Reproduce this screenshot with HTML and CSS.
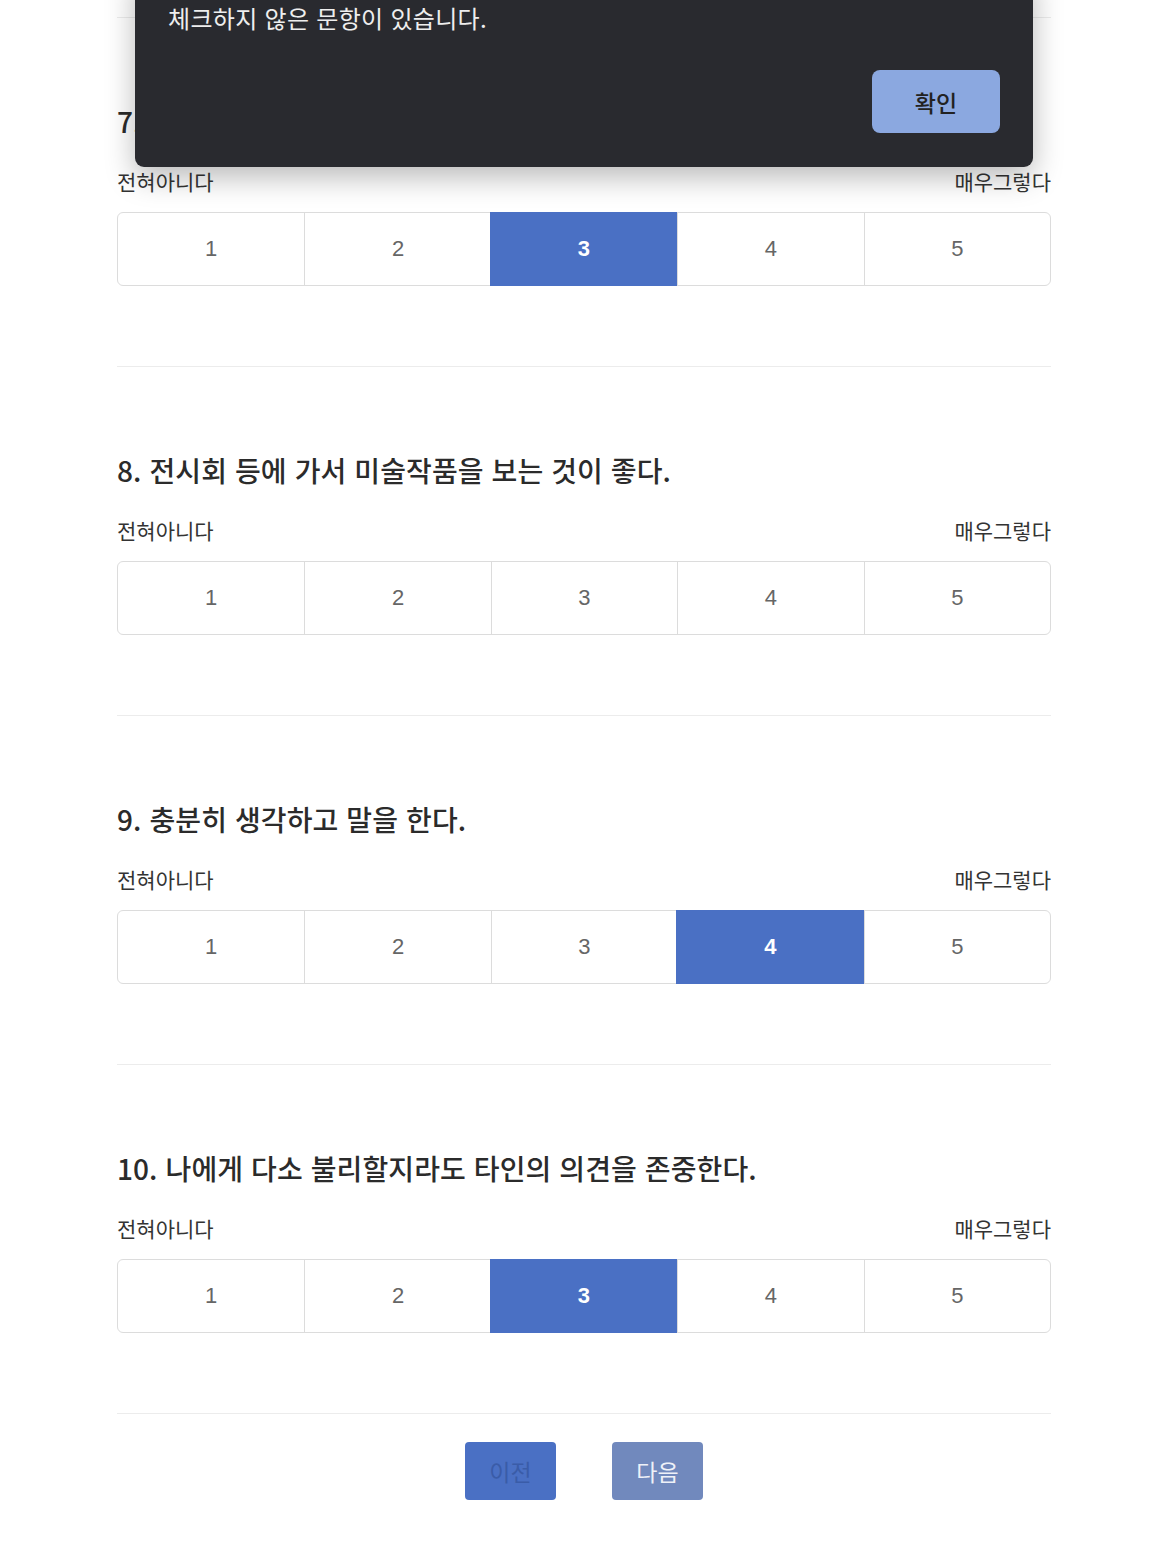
FILE: index.html
```html
<!DOCTYPE html>
<html lang="ko">
<head>
<meta charset="utf-8">
<link rel="stylesheet" href="styles.css">
</head>
<body>
<main class="survey">
  <section class="question">
    <h2 class="q-title">7. 사람들과 어울리는 것을 좋아한다.</h2>
    <div class="labels"><span>전혀아니다</span><span>매우그렇다</span></div>
    <div class="scale">
      <div class="cell">1</div><div class="cell">2</div><div class="cell selected">3</div><div class="cell">4</div><div class="cell">5</div>
    </div>
  </section>
  <section class="question">
    <h2 class="q-title">8. 전시회 등에 가서 미술작품을 보는 것이 좋다.</h2>
    <div class="labels"><span>전혀아니다</span><span>매우그렇다</span></div>
    <div class="scale">
      <div class="cell">1</div><div class="cell">2</div><div class="cell">3</div><div class="cell">4</div><div class="cell">5</div>
    </div>
  </section>
  <section class="question">
    <h2 class="q-title">9. 충분히 생각하고 말을 한다.</h2>
    <div class="labels"><span>전혀아니다</span><span>매우그렇다</span></div>
    <div class="scale">
      <div class="cell">1</div><div class="cell">2</div><div class="cell">3</div><div class="cell selected">4</div><div class="cell">5</div>
    </div>
  </section>
  <section class="question">
    <h2 class="q-title">10. 나에게 다소 불리할지라도 타인의 의견을 존중한다.</h2>
    <div class="labels"><span>전혀아니다</span><span>매우그렇다</span></div>
    <div class="scale">
      <div class="cell">1</div><div class="cell">2</div><div class="cell selected">3</div><div class="cell">4</div><div class="cell">5</div>
    </div>
  </section>
  <footer class="nav">
    <button class="btn prev">이전</button>
    <button class="btn next">다음</button>
  </footer>
</main>
<div class="dialog">
  <p class="dialog-text">체크하지 않은 문항이 있습니다.</p>
  <div class="dialog-actions"><button class="dialog-btn">확인</button></div>
</div>
</body>
</html>
```
FILE: styles.css
```css
html, body {
  margin: 0;
  padding: 0;
  background: #fff;
}
body {
  font-family: "Noto Sans CJK KR", "Noto Sans", sans-serif;
  color: #333;
}
.survey {
  width: 934px;
  margin: 0 0 0 117px;
  padding-top: 17px;
}
.question {
  border-top: 1px solid #ececec;
  padding: 86px 0 80px;
}
.q-title {
  margin: 0;
  font-size: 28px;
  line-height: 34px;
  font-weight: 500;
  letter-spacing: 0.1px;
  color: #2b2b2b;
}
.labels {
  margin-top: 28px;
  display: flex;
  justify-content: space-between;
  font-size: 21px;
  line-height: 31px;
  color: #333;
}
.scale {
  margin-top: 15px;
  display: grid;
  grid-template-columns: repeat(5, 1fr);
  height: 74px;
  border: 1px solid #dcdcdc;
  border-radius: 6px;
  box-sizing: border-box;
}
.cell {
  display: flex;
  align-items: center;
  justify-content: center;
  font-family: "Liberation Sans", Arial, sans-serif;
  font-size: 22px;
  color: #666;
  border-left: 1px solid #dcdcdc;
}
.cell:first-child {
  border-left: none;
}
.cell.selected {
  background: #4a70c4;
  color: #fff;
  font-weight: 700;
  margin: -1px 0 -1px -1px;
  border-left-color: #4a70c4;
}
.nav {
  border-top: 1px solid #ececec;
  padding: 28px 0 43px;
  display: flex;
  justify-content: center;
  gap: 56px;
}
.btn {
  width: 91px;
  height: 58px;
  border: none;
  border-radius: 4px;
  font-family: "Noto Sans CJK KR", sans-serif;
  font-size: 23px;
  padding: 0;
}
.btn.prev {
  background: #4a70c4;
  color: #3a5ca8;
}
.btn.next {
  background: #7189bd;
  color: #eef1f8;
}
.dialog {
  position: absolute;
  top: -30px;
  left: 135px;
  width: 898px;
  box-sizing: border-box;
  padding: 32px 33px 34px;
  background: #292a2f;
  border-radius: 0 0 9px 9px;
  box-shadow: 0 10px 30px rgba(0, 0, 0, 0.28);
}
.dialog-text {
  margin: 0;
  font-size: 24px;
  line-height: 32px;
  letter-spacing: 0.3px;
  color: #eeeeee;
}
.dialog-actions {
  margin-top: 36px;
  display: flex;
  justify-content: flex-end;
}
.dialog-btn {
  width: 128px;
  height: 63px;
  border: none;
  border-radius: 8px;
  background: #8ba8e0;
  color: #222;
  font-family: "Noto Sans CJK KR", sans-serif;
  font-size: 23px;
  font-weight: 500;
  padding: 0;
}
```
